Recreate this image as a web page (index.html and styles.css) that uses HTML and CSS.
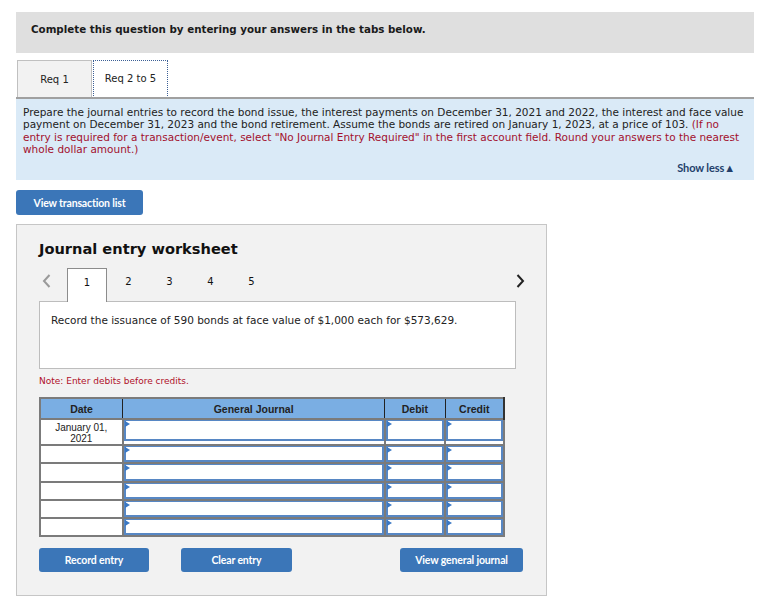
FILE: index.html
```html
<!DOCTYPE html>
<html lang="en">
<head>
    <meta charset="UTF-8">
    <title>Journal entry worksheet</title>
    <link rel="stylesheet" href="styles.css">
</head>
<body>
    <div class="intro">Complete this question by entering your answers in the tabs below.</div>

    <div class="req-tabs">
        <div class="req-tab">Req 1</div>
        <div class="req-tab active">Req 2 to 5</div>
    </div>

    <div class="question">
        <p>Prepare the journal entries to record the bond issue, the interest payments on December 31, 2021 and 2022, the interest and face value payment on December 31, 2023 and the bond retirement. Assume the bonds are retired on January 1, 2023, at a price of 103. <span class="hint">(If no entry is required for a transaction/event, select "No Journal Entry Required" in the first account field. Round your answers to the nearest whole dollar amount.)</span></p>
        <div class="show-less">Show less&#9650;</div>
    </div>

    <button class="btn btn-list">View transaction list</button>

    <div class="worksheet">
        <h2>Journal entry worksheet</h2>

        <div class="nav">
            <span class="chev prev">
                <svg width="9" height="14" viewBox="0 0 9 14"><path d="M7.5 1 L2 7 L7.5 13" fill="none" stroke="#9a9a9a" stroke-width="2"/></svg>
            </span>
            <span class="step current">1</span>
            <span class="step">2</span>
            <span class="step">3</span>
            <span class="step">4</span>
            <span class="step">5</span>
            <span class="chev next">
                <svg width="9" height="14" viewBox="0 0 9 14"><path d="M1.5 1 L7 7 L1.5 13" fill="none" stroke="#222" stroke-width="2"/></svg>
            </span>
        </div>

        <div class="desc">Record the issuance of 590 bonds at face value of $1,000 each for $573,629.</div>

        <div class="note">Note: Enter debits before credits.</div>

        <table class="journal">
            <thead>
                <tr>
                    <th class="c-date">Date</th>
                    <th class="c-acct">General Journal</th>
                    <th class="c-debit">Debit</th>
                    <th class="c-credit">Credit</th>
                </tr>
            </thead>
            <tbody>
                <tr class="first">
                    <td class="date">January 01,<br>2021</td>
                    <td><div class="field"></div></td>
                    <td><div class="field"></div></td>
                    <td><div class="field"></div></td>
                </tr>
                <tr>
                    <td class="date"></td>
                    <td><div class="field"></div></td>
                    <td><div class="field"></div></td>
                    <td><div class="field"></div></td>
                </tr>
                <tr class="tall">
                    <td class="date"></td>
                    <td><div class="field"></div></td>
                    <td><div class="field"></div></td>
                    <td><div class="field"></div></td>
                </tr>
                <tr>
                    <td class="date"></td>
                    <td><div class="field"></div></td>
                    <td><div class="field"></div></td>
                    <td><div class="field"></div></td>
                </tr>
                <tr>
                    <td class="date"></td>
                    <td><div class="field"></div></td>
                    <td><div class="field"></div></td>
                    <td><div class="field"></div></td>
                </tr>
                <tr>
                    <td class="date"></td>
                    <td><div class="field"></div></td>
                    <td><div class="field"></div></td>
                    <td><div class="field"></div></td>
                </tr>
            </tbody>
        </table>

        <div class="actions">
            <button class="btn btn-record">Record entry</button>
            <button class="btn btn-clear">Clear entry</button>
            <button class="btn btn-view">View general journal</button>
        </div>
    </div>
</body>
</html>
```

FILE: styles.css
```css
body {
    margin: 0;
    padding: 12px 0 0 16px;
    font-family: "DejaVu Sans", Verdana, sans-serif;
    font-size: 11px;
    color: #222;
    background: #ffffff;
}
.intro {
    width: 723px;
    height: 41px;
    padding-left: 15px;
    background: #dfdfdf;
    font-weight: bold;
    font-size: 10.3px;
    line-height: 35px;
    color: #1a1a1a;
}
.req-tabs {
    display: flex;
    margin-top: 7px;
    padding-left: 1px;
}
.req-tab {
    box-sizing: border-box;
    width: 75px;
    height: 38px;
    border: 1px solid #c0c0c0;
    border-bottom: none;
    background: #f2f2f2;
    text-align: center;
    line-height: 37px;
    font-size: 10px;
    color: #222;
}
.req-tab.active {
    margin-left: 1px;
    background: #ffffff;
    border: 1px dotted #3c5f95;
    border-bottom: none;
    line-height: 36px;
}
.question {
    width: 731px;
    height: 74px;
    padding: 7px 0 0 7px;
    margin-top: -1px;
    border-top: 2px solid #a0a0a0;
    background: #daeaf7;
    position: relative;
}
.question p {
    margin: 0;
    width: 722px;
    font-size: 10.5px;
    line-height: 12.3px;
    color: #222;
}
.hint {
    color: #a3112e;
}
.show-less {
    position: absolute;
    right: 19px;
    bottom: 6px;
    font-family: Lato, sans-serif;
    font-weight: bold;
    font-size: 11px;
    letter-spacing: -0.1px;
    color: #233f6b;
}
.btn {
    background: #3b76b8;
    color: #ffffff;
    border: none;
    border-radius: 3px;
    font-family: Lato, sans-serif;
    font-weight: bold;
    font-size: 10.5px;
    letter-spacing: -0.15px;
    padding: 0;
    height: 25px;
    cursor: pointer;
}
.btn-list {
    display: block;
    margin-top: 10px;
    width: 127px;
}
.worksheet {
    box-sizing: border-box;
    width: 531px;
    height: 372px;
    margin-top: 9px;
    padding: 15px 0 0 22px;
    border: 1px solid #c6c6c6;
    background: #f2f2f2;
}
.worksheet h2 {
    margin: 0;
    font-size: 14.6px;
    font-weight: bold;
    color: #111;
    line-height: 18px;
}
.nav {
    display: flex;
    align-items: flex-end;
    margin-top: 9px;
    height: 34px;
    width: 486px;
}
.chev {
    box-sizing: border-box;
    display: flex;
    align-items: flex-start;
    padding-top: 6px;
    height: 33px;
}
.chev.prev {
    width: 28px;
    padding-left: 3px;
}
.chev.next {
    margin-left: auto;
}
.step {
    box-sizing: border-box;
    width: 41px;
    height: 33px;
    line-height: 28px;
    text-align: center;
    font-size: 10px;
    color: #111;
}
.step.current {
    width: 40px;
    margin-right: 1px;
    background: #ffffff;
    border: 1px solid #8c8c8c;
    border-bottom: none;
    height: 34px;
    margin-bottom: -1px;
    position: relative;
    z-index: 1;
}
.desc {
    box-sizing: border-box;
    width: 477px;
    height: 68px;
    padding: 12px 0 0 11px;
    background: #ffffff;
    border: 1px solid #bdbdbd;
    font-size: 10.5px;
    color: #222;
}
.note {
    margin-top: 7px;
    font-size: 9px;
    color: #b0102a;
}
.journal {
    margin-top: 11px;
    border-collapse: collapse;
    width: 466px;
    font-family: "Liberation Sans", Arial, sans-serif;
    background: #ffffff;
}
.journal th {
    height: 19px;
    padding: 0;
    background: #7aaee3;
    font-size: 10.5px;
    font-weight: bold;
    color: #222;
    border: 1px solid #222;
    border-top: 2px solid #7b7b7b;
}
.journal th:first-child {
    border-left: 2px solid #7b7b7b;
}
.journal th:last-child {
    border-right: 2px solid #333;
}
.c-date { width: 82px; }
.c-acct { width: 266px; }
.c-debit { width: 60px; }
.c-credit { width: 58px; }
.journal td {
    padding: 0;
    border: 2px solid #7b7b7b;
    vertical-align: top;
}
.journal td.date {
    text-align: center;
    font-size: 10px;
    line-height: 11px;
    color: #222;
    padding-top: 2px;
}
.journal td .field {
    box-sizing: border-box;
    height: 16px;
    border: 2px solid #5787c4;
    border-top-width: 1px;
    position: relative;
}
.journal tr.first td .field {
    height: 21px;
}
.journal tr.tall td .field {
    height: 17px;
}
.journal td .field::before {
    content: "";
    position: absolute;
    left: -1px;
    top: 0;
    border-top: 3px solid transparent;
    border-bottom: 3px solid transparent;
    border-left: 5px solid #3a78c4;
}
.actions {
    display: flex;
    margin-top: 11px;
}
.btn-record { width: 110px; height: 24px; }
.btn-clear { width: 111px; height: 24px; margin-left: 32px; }
.btn-view { width: 123px; height: 24px; margin-left: 108px; }
```
